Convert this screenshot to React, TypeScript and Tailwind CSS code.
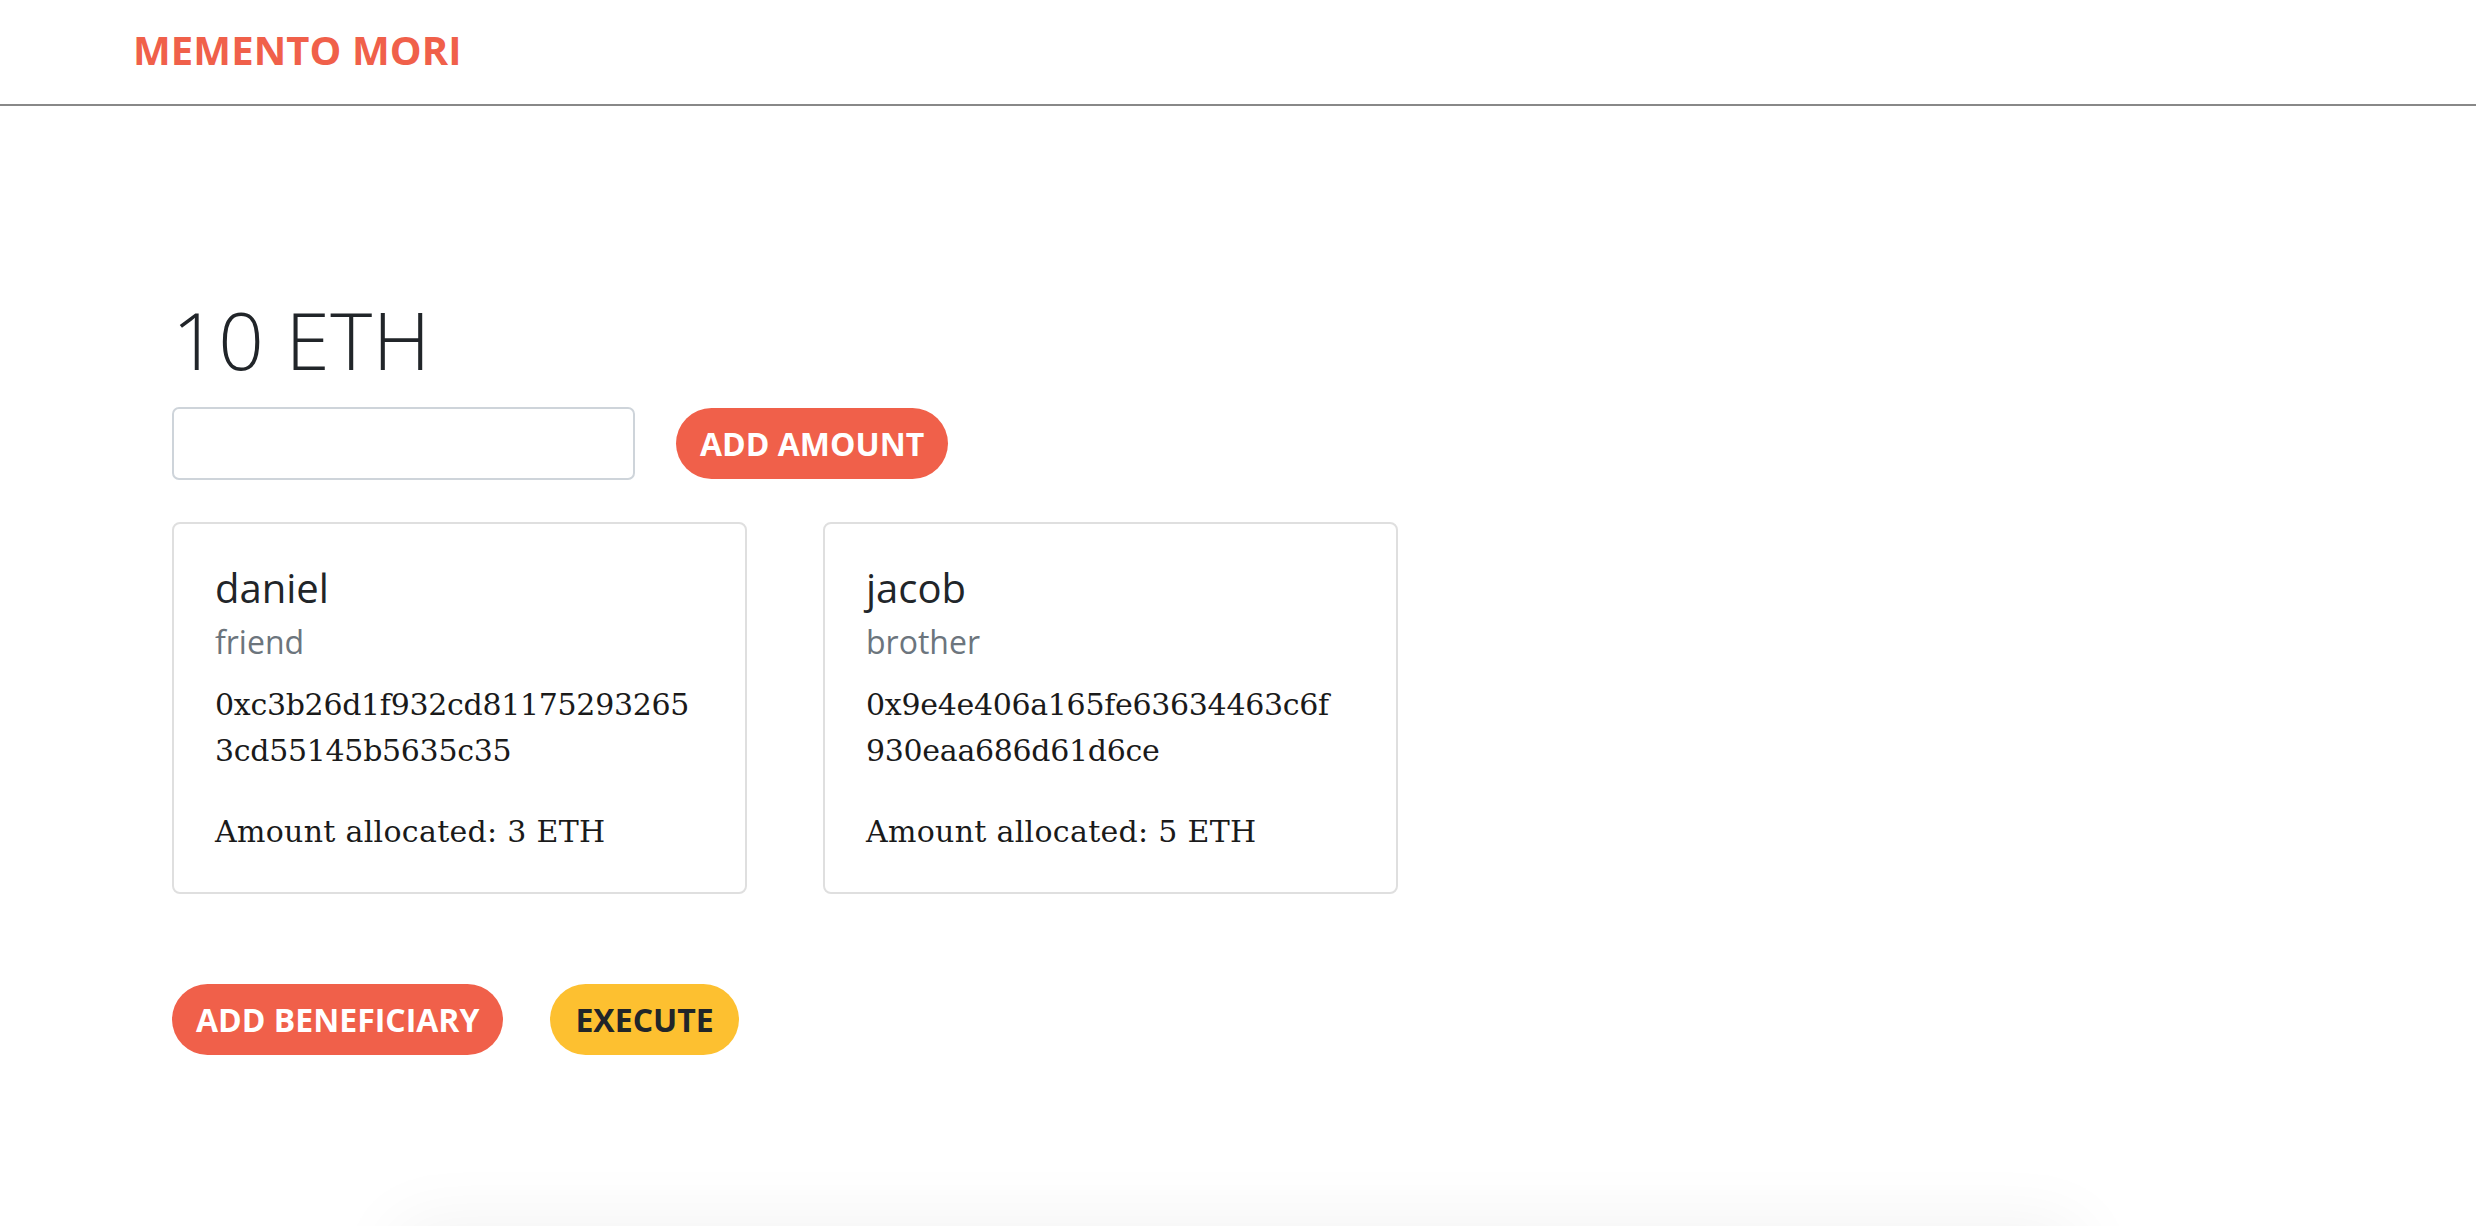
import React from "react";

const beneficiaries = [
  {
    name: "daniel",
    relation: "friend",
    address: ["0xc3b26d1f932cd81175293265", "3cd55145b5635c35"],
    amount: 3,
  },
  {
    name: "jacob",
    relation: "brother",
    address: ["0x9e4e406a165fe63634463c6f", "930eaa686d61d6ce"],
    amount: 5,
  },
];

const BeneficiaryCard = ({ b }: { b: (typeof beneficiaries)[number] }) => {
  return (
    <div className="w-[575px] h-[372px] border-2 border-[#dfdfdf] rounded-[8px] px-[41px] pt-[40px] bg-white">
      <div className="text-[40px] leading-[48px] text-[#212529] font-['Open_Sans',sans-serif]">
        {b.name}
      </div>
      <div className="mt-[11px] text-[32px] leading-[38px] text-[#6c757d] font-['Open_Sans',sans-serif]">
        {b.relation}
      </div>
      <div className="mt-[21px] text-[30px] leading-[46px] text-[#1a1a1a] font-['DejaVu_Serif',serif] whitespace-nowrap tracking-[-0.3px]">
        {b.address.map((line) => (
          <div key={line}>{line}</div>
        ))}
      </div>
      <div className="mt-[35px] text-[30px] leading-[46px] text-[#1a1a1a] font-['DejaVu_Serif',serif] whitespace-nowrap tracking-[0.3px]">
        Amount allocated: {b.amount} ETH
      </div>
    </div>
  );
};

export default function App() {
  return (
    <div className="min-h-[1226px] bg-white font-['Open_Sans',sans-serif] overflow-hidden">
      {/* header */}
      <header className="h-[106px] border-b-2 border-[#888888] flex items-center pl-[133px] pb-[4px]">
        <span className="text-[40px] font-bold text-[#f0604a] tracking-[0.1px]">MEMENTO MORI</span>
      </header>

      <main className="pl-[172px]">
        <h1 className="mt-[185px] text-[80px] leading-[96px] font-[350] text-[#212529] tracking-[0.5px]">10 ETH</h1>

        <div className="mt-[20px] flex items-center gap-[41px]">
          <input
            type="text"
            className="w-[463px] h-[73px] border-2 border-[#ced4da] rounded-[7px] px-4 text-[32px] outline-none"
          />
          <button className="h-[71px] px-[24px] rounded-full bg-[#f0604a] text-white text-[32px] font-bold">
            ADD AMOUNT
          </button>
        </div>

        <div className="mt-[42px] flex gap-[76px]">
          {beneficiaries.map((b) => (
            <BeneficiaryCard key={b.name} b={b} />
          ))}
        </div>

        <div className="mt-[90px] flex gap-[47px]">
          <button className="h-[71px] px-[24px] rounded-full bg-[#f0604a] text-white text-[32px] font-bold">
            ADD BENEFICIARY
          </button>
          <button className="h-[71px] px-[25px] rounded-full bg-[#fdc030] text-[#212529] text-[32px] font-bold">
            EXECUTE
          </button>
        </div>
      </main>

      {/* section below the fold, only its shadow shows */}
      <div className="mt-[171px] mx-auto w-[1680px] h-[300px] bg-white shadow-[0_0_70px_rgba(0,0,0,0.06)]" />
    </div>
  );
}
